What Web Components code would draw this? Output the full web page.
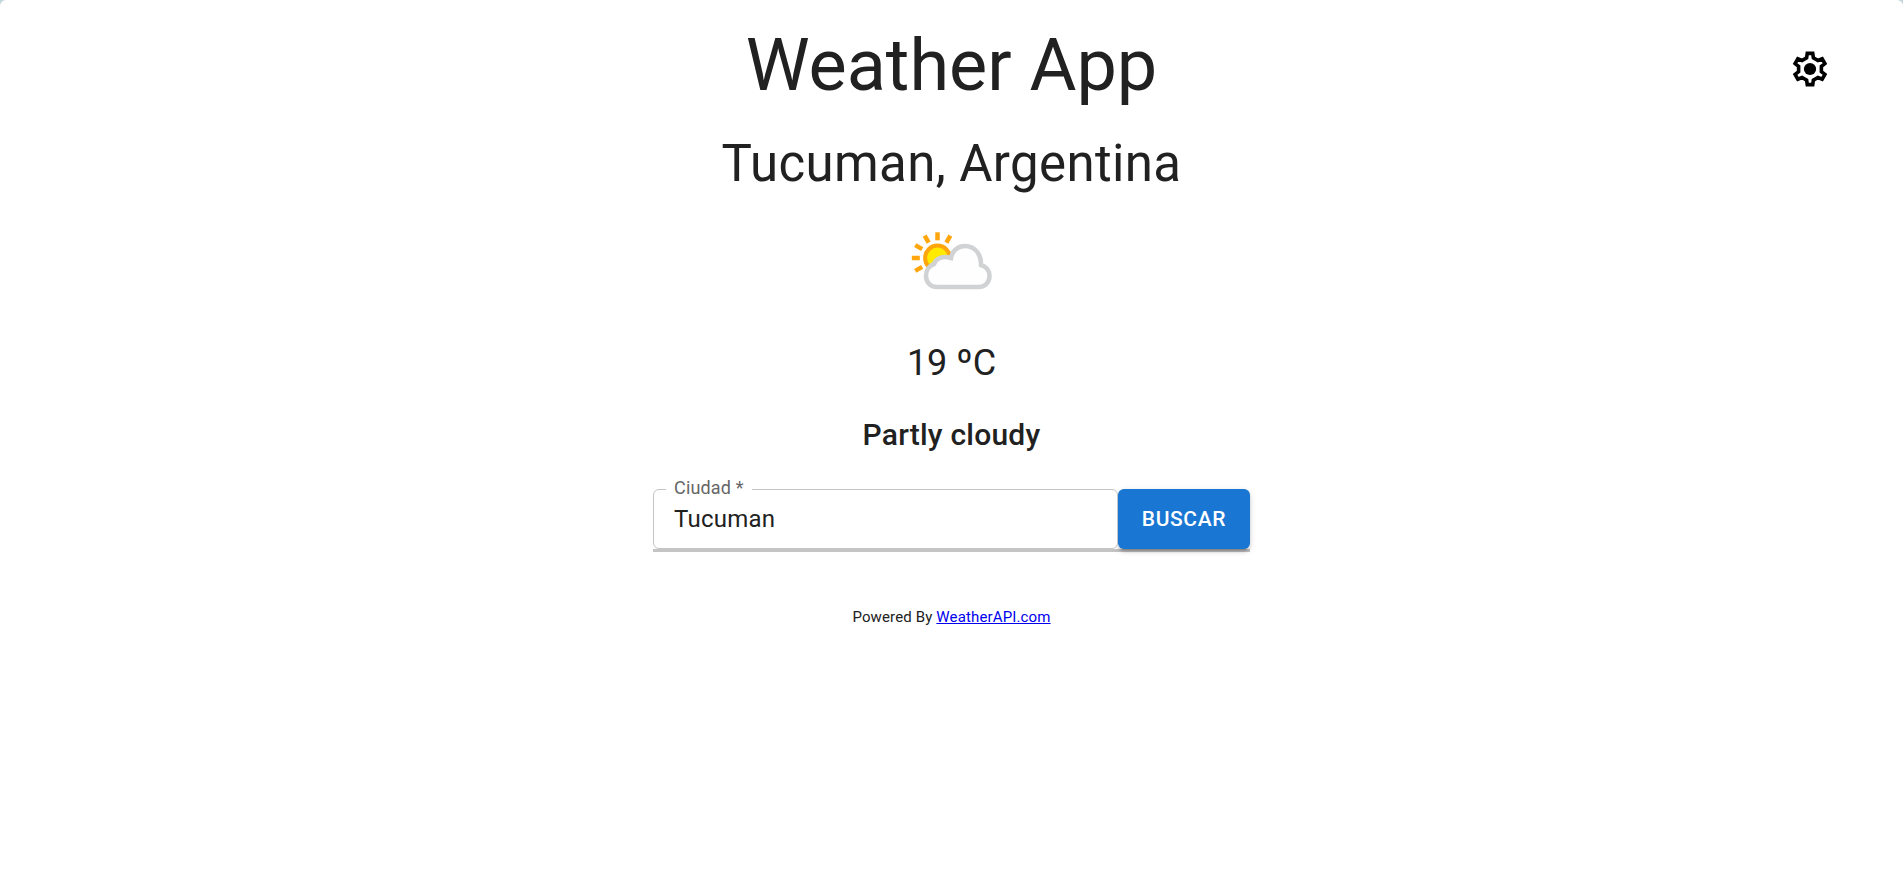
<!DOCTYPE html>
<html lang="es">
<head>
<meta charset="utf-8">
<meta name="viewport" content="width=device-width, initial-scale=1">
<title>Weather App</title>
<style>
  body {
    margin: 0;
    min-height: 100vh;
    background: #c0d6dc;
    color: #212121;
    font-family: Roboto, "Liberation Sans", sans-serif;
  }
</style>
</head>
<body>
<weather-app></weather-app>

<script>
class WeatherElement extends HTMLElement {
  constructor() {
    super();
    this.attachShadow({ mode: "open" }).innerHTML = this.constructor.markup;
  }
}

class WeatherIcon extends WeatherElement {
  static markup = `
    <style>
      :host { display: block; width: 96px; height: 96px; }
      svg { display: block; width: 100%; height: 100%; }
    </style>
    <svg viewBox="0 0 96 96" fill="none" role="img" aria-label="Partly cloudy">
      <circle cx="33.500" cy="39" r="12.4" fill="#ffea00" stroke="#ffa60d" stroke-width="4"/>
      <g stroke="#ffa60d" stroke-width="4.5">
        <path d="M33.5 13.3v8"/>
        <path d="M33.5 13.3v8" transform="rotate(30 33.5 39)"/>
        <path d="M33.5 13.3v8" transform="rotate(-30 33.5 39)"/>
        <path d="M33.5 13.3v8" transform="rotate(-60 33.5 39)"/>
        <path d="M33.5 13.3v8" transform="rotate(-90 33.5 39)"/>
        <path d="M33.5 13.3v8" transform="rotate(-120 33.5 39)"/>
      </g>
      <path d="M33 68C26 68 22 63 22 57C22 51 25.5 46.5 30 45C32 39 39 36.5 47 39C48.5 31 54.500 27 61 27C70.500 27 77.500 35 77 46C82.500 47.500 85.500 52 85.500 57C85.500 63 81.500 68 74.500 68Z" fill="#fefefe" stroke="#d0d2d4" stroke-width="4.5"/>
    </svg>`;
}
customElements.define("weather-icon", WeatherIcon);

class SettingsButton extends WeatherElement {
  static markup = `
    <style>
      :host { display: block; }
      button { display: block; padding: 8px; border: 0; border-radius: 50%; background: none; color: #000; cursor: pointer; }
      svg { display: block; width: 38px; height: 38px; }
    </style>
    <button type="button" aria-label="Configuración">
      <svg viewBox="-18 -18 36 36" aria-hidden="true">
        <path fill="none" stroke="currentColor" stroke-width="3.4" d="M-3.2-10.6L-2.6-14.8H2.6L3.2-10.6L7.58-8.07L11.52-9.65L14.12-5.15L10.78-2.53V2.53L14.12 5.15L11.52 9.65L7.58 8.07L3.2 10.6L2.6 14.8H-2.6L-3.2 10.6L-7.58 8.07L-11.52 9.65L-14.12 5.15L-10.78 2.53V-2.53L-14.12-5.15L-11.52-9.65L-7.58-8.07Z"/>
        <circle r="5.8" fill="currentColor"/>
      </svg>
    </button>`;
}
customElements.define("settings-button", SettingsButton);

class AppHeader extends WeatherElement {
  static markup = `
    <style>
      :host { display: grid; grid-template-columns: 1fr auto 1fr; align-items: start; }
      h1 { grid-column: 2; margin: 0; font-size: 72px; line-height: 84px; font-weight: 400; text-align: center; }
      ::slotted(settings-button) { grid-column: 3; justify-self: end; margin: 18px 66px 0 0; }
      @media (max-width: 700px) {
        h1 { font-size: 40px; }
        ::slotted(settings-button) { margin-right: 8px; }
      }
    </style>
    <h1>Weather App</h1>
    <slot></slot>`;
}
customElements.define("app-header", AppHeader);

class CurrentWeather extends WeatherElement {
  static markup = `
    <style>
      :host { display: flex; flex-direction: column; align-items: center; gap: 24px; text-align: center; }
      h2, h3, p { margin: 0; }
      h2 { font-size: 51px; line-height: 63px; font-weight: 400; letter-spacing: 0.00735em; }
      p { font-size: 36px; line-height: 48px; }
      h3 { font-size: 30px; line-height: 48px; font-weight: 500; letter-spacing: 0.0075em; }
    </style>
    <h2><slot name="place"></slot></h2>
    <weather-icon></weather-icon>
    <p><slot name="temperature"></slot></p>
    <h3><slot name="condition"></slot></h3>`;
}
customElements.define("current-weather", CurrentWeather);

class CitySearch extends WeatherElement {
  static markup = `
    <style>
      :host { display: block; width: 100%; max-width: 597px; }
      form { display: flex; border-bottom: 3px solid #c4c4c4; }
      .field { position: relative; flex: 1; min-width: 0; }
      label {
        position: absolute; left: 13px; top: -13px; padding: 0 8px;
        background: #fff; color: #666; font-size: 18px; line-height: 24px;
        letter-spacing: 0.00938em;
      }
      input {
        display: block; box-sizing: border-box; width: 100%; height: 60px;
        padding: 0 20px; border: 1px solid #c4c4c4; border-radius: 6px;
        background: #fff; color: #212121; font: inherit; font-size: 24px;
        letter-spacing: 0.00938em; outline: none;
      }
      button {
        height: 60px; padding: 0 24px; border: 0; border-radius: 6px;
        background: #1976d2; color: #fff; font: inherit; font-size: 21px;
        font-weight: 500; letter-spacing: 0.02857em; text-transform: uppercase;
        cursor: pointer;
        box-shadow: 0 4px 2px -3px #0003, 0 3px 3px 0 #0002, 0 2px 7px 0 #0002;
      }
    </style>
    <form>
      <div class="field">
        <input id="city" name="city" type="text" value="Tucuman" required autocomplete="off">
        <label for="city">Ciudad *</label>
      </div>
      <button type="submit">Buscar</button>
    </form>`;
  connectedCallback() {
    this.shadowRoot.querySelector("form").addEventListener("submit", e => e.preventDefault());
  }
}
customElements.define("city-search", CitySearch);

class AppFooter extends WeatherElement {
  static markup = `
    <style>
      :host { display: block; font-size: 15px; line-height: 24px; letter-spacing: 0.00938em; text-align: center; }
      a { color: #0000ee; }
    </style>
    <footer>Powered By <a href="https://www.weatherapi.com/">WeatherAPI.com</a></footer>`;
}
customElements.define("app-footer", AppFooter);

class WeatherApp extends WeatherElement {
  static markup = `
    <style>
      :host {
        display: flex; flex-direction: column; gap: 24px; box-sizing: border-box;
        min-height: 100vh; padding: 24px 0; background: #fff; border-radius: 6px 6px 0 0;
      }
      city-search { align-self: center; margin-top: 6px; }
      app-footer { margin-top: 29px; }
    </style>
    <app-header><settings-button></settings-button></app-header>
    <current-weather>
      <span slot="place">Tucuman, Argentina</span>
      <span slot="temperature">19 ºC</span>
      <span slot="condition">Partly cloudy</span>
    </current-weather>
    <city-search></city-search>
    <app-footer></app-footer>`;
}
customElements.define("weather-app", WeatherApp);
</script>
</body>
</html>
